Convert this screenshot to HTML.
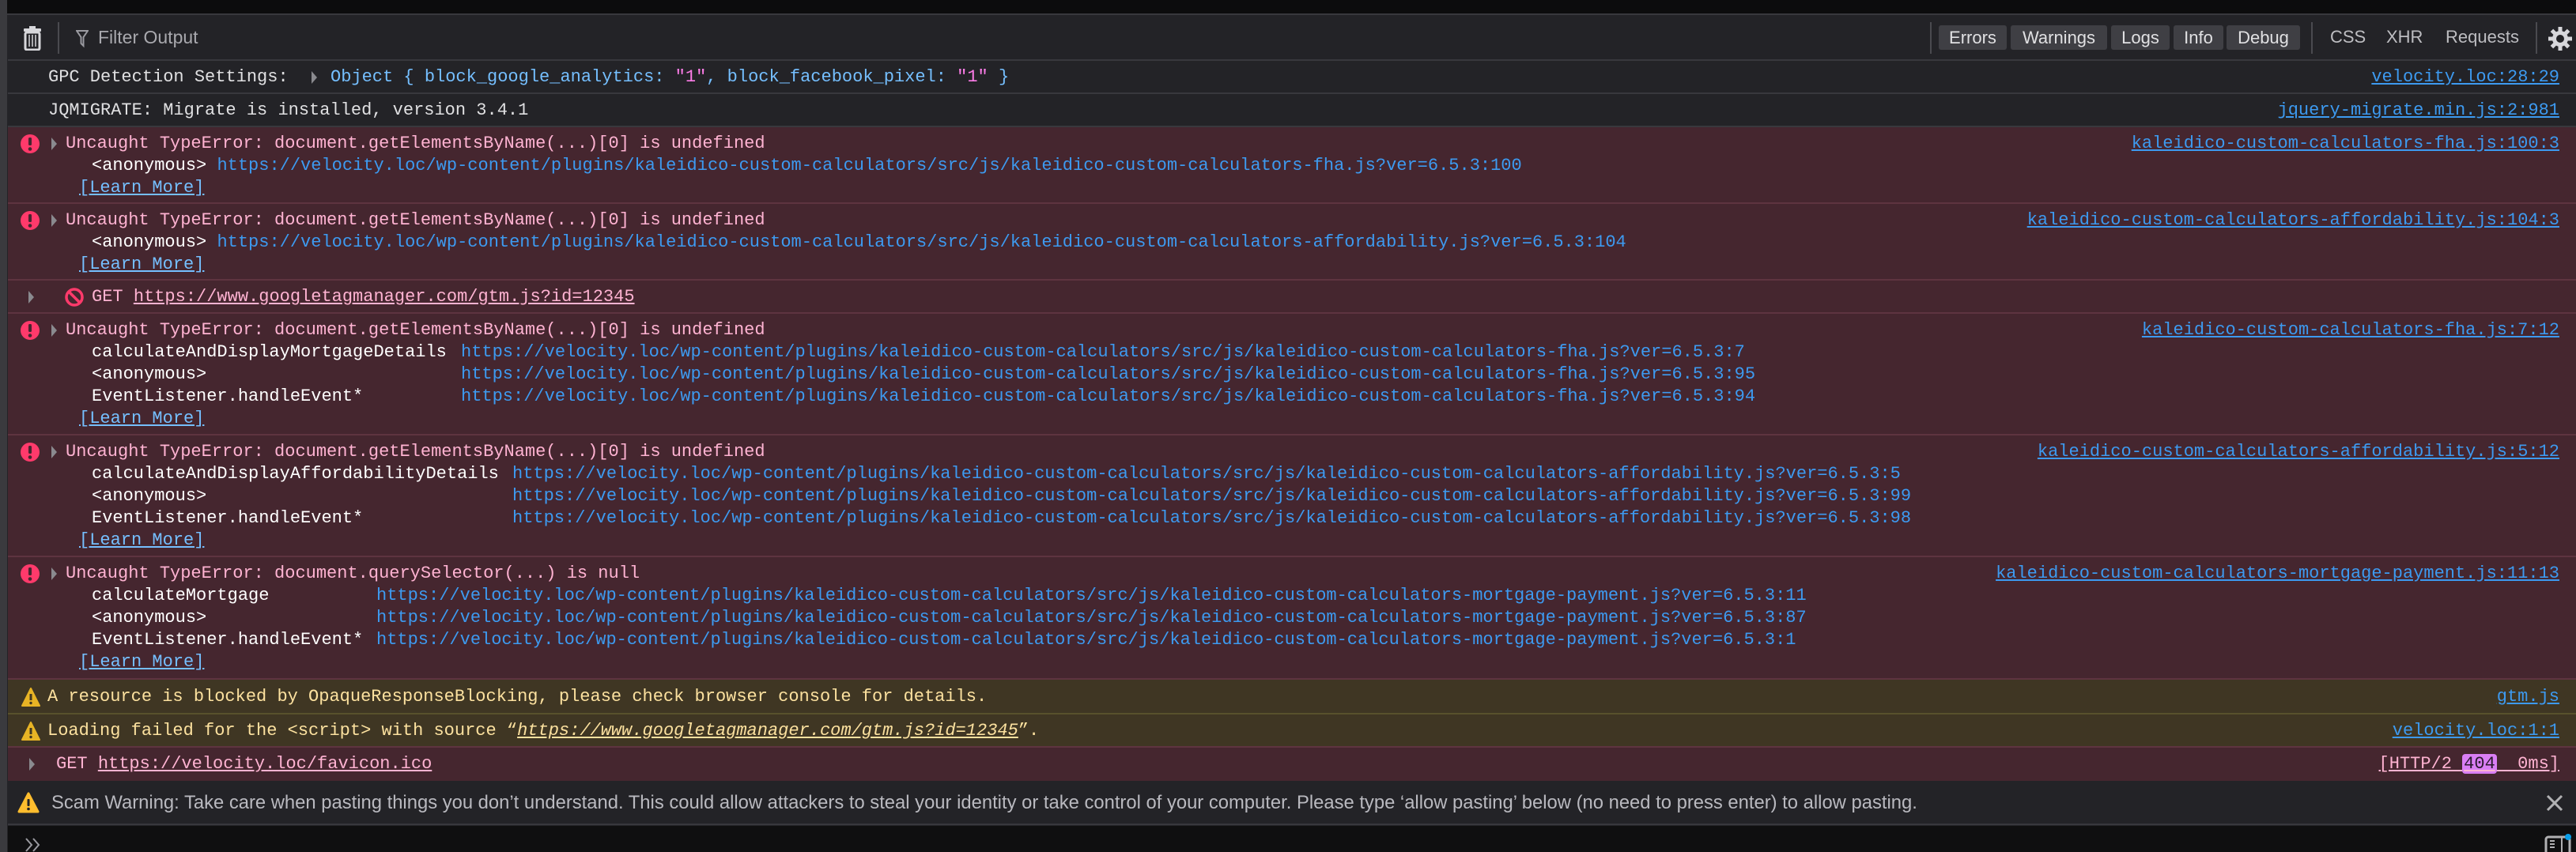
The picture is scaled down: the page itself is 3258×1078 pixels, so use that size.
<!DOCTYPE html>
<html><head><meta charset="utf-8"><style>
*{margin:0;padding:0;box-sizing:border-box}
body{width:3258px;height:1078px;background:#232327;position:relative;overflow:hidden;font-family:"Liberation Mono",monospace;font-size:22px;color:#e8e8ea}
.a{position:absolute;white-space:pre;line-height:28px}
.row{position:absolute;left:10px;right:0;border-bottom:2px solid #38383d}
.err{background:#45262f;border-bottom:2px solid #5e3440}
.warn{background:#3f3623;border-bottom:2px solid #58512c}
.et{color:#ffb3d2}
.wt{color:#fce19f}
.lk{color:#3d9af0}
.rl{color:#3d9af0;text-decoration:underline;position:absolute;right:21px;white-space:pre;line-height:28px}
.lm{color:#75bfff;text-decoration:underline}
.fn{color:#fff}
.tri{width:0;height:0;border-left:7px solid #8a8a8f;border-top:8px solid transparent;border-bottom:8px solid transparent;position:absolute}
.sans{font-family:"Liberation Sans",sans-serif}
.btn{position:absolute;top:32px;height:31px;background:#3f3f44;border-radius:3px;color:#e0e0e2;font-family:"Liberation Sans",sans-serif;font-size:22px;line-height:31px;text-align:center}
.sep{position:absolute;width:2px;background:#4a4a4f}
</style></head><body>
<div style="position:absolute;left:0;top:0;width:3258px;height:19px;background:#0c0c0d;border-bottom:2px solid #38383d"></div>
<div style="position:absolute;left:0;top:0;width:9px;height:1078px;background:#3a3a3e"></div>
<!-- toolbar -->
<div style="position:absolute;left:10px;top:20px;right:0;height:57px;background:#232327;border-bottom:2px solid #38383d"></div>
<svg style="position:absolute;left:28px;top:31px" width="26" height="33" viewBox="0 0 26 33"><path d="M9 2h8v3H9z" fill="#d7d7db"/><rect x="2" y="5" width="22" height="4" rx="1" fill="#d7d7db"/><rect x="4" y="10" width="18" height="22" rx="2" fill="none" stroke="#d7d7db" stroke-width="3"/><path d="M9 13v15M13 13v15M17 13v15" stroke="#d7d7db" stroke-width="1.5"/></svg>
<div class="sep" style="left:73px;top:28px;height:40px"></div>
<svg style="position:absolute;left:96px;top:37px" width="16" height="24" viewBox="0 0 16 24"><path d="M1 2h14l-5.5 8v11l-3-3V10z" fill="none" stroke="#9a9aa0" stroke-width="2"/></svg>
<div class="a sans" style="left:124px;top:33px;font-size:23px;color:#a9a9ae">Filter Output</div>
<div class="sep" style="left:2441px;top:28px;height:40px"></div>
<div class="btn" style="left:2452px;width:86px">Errors</div>
<div class="btn" style="left:2543px;width:122px">Warnings</div>
<div class="btn" style="left:2670px;width:74px">Logs</div>
<div class="btn" style="left:2749px;width:63px">Info</div>
<div class="btn" style="left:2816px;width:93px">Debug</div>
<div class="sep" style="left:2923px;top:28px;height:40px"></div>
<div class="a sans" style="left:2947px;top:33px;font-size:22px;color:#bdbdc1">CSS</div>
<div class="a sans" style="left:3018px;top:33px;font-size:22px;color:#bdbdc1">XHR</div>
<div class="a sans" style="left:3093px;top:33px;font-size:22px;color:#bdbdc1">Requests</div>
<div class="sep" style="left:3207px;top:28px;height:40px"></div>
<svg style="position:absolute;left:3221px;top:32px" width="34" height="34" viewBox="0 0 34 34"><g stroke="#d7d7db" stroke-width="5"><path d="M17 2v30M2 17h30M6.4 6.4l21.2 21.2M27.6 6.4L6.4 27.6"/></g><circle cx="17" cy="17" r="10" fill="#d7d7db"/><circle cx="17" cy="17" r="5" fill="#232327"/></svg>

<!-- GPC -->
<div class="row" style="top:77px;height:42px"></div>
<div class="a" style="left:61px;top:84px;color:#e0e0e2">GPC Detection Settings:</div>
<div class="tri" style="left:394px;top:90px"></div>
<div class="a" style="left:418px;top:84px;color:#75bfff">Object { block_google_analytics: <span style="color:#ff7de9">"1"</span>, block_facebook_pixel: <span style="color:#ff7de9">"1"</span> }</div>
<div class="rl" style="top:84px">velocity.loc:28:29</div>
<!-- JQ -->
<div class="row" style="top:119px;height:42px"></div>
<div class="a" style="left:61px;top:126px;color:#e0e0e2">JQMIGRATE: Migrate is installed, version 3.4.1</div>
<div class="rl" style="top:126px">jquery-migrate.min.js:2:981</div>

<!-- err1 -->
<div class="row err" style="top:161px;height:97px"></div>
<svg style="position:absolute;left:26px;top:170px" width="24" height="24"><circle cx="12" cy="12" r="12" fill="#ff3a6b"/><rect x="10" y="4" width="4" height="10" rx="1.5" fill="#45262f"/><circle cx="12" cy="18.5" r="2.3" fill="#45262f"/></svg>
<div class="tri" style="left:65px;top:174px"></div>
<div class="a et" style="left:83px;top:168px">Uncaught TypeError: document.getElementsByName(...)[0] is undefined</div>
<div class="rl" style="top:168px">kaleidico-custom-calculators-fha.js:100:3</div>
<div class="a" style="left:116px;top:196px"><span class="fn">&lt;anonymous&gt;</span> <span class="lk">https://velocity.loc/wp-content/plugins/kaleidico-custom-calculators/src/js/kaleidico-custom-calculators-fha.js?ver=6.5.3:100</span></div>
<div class="a lm" style="left:100px;top:224px">[Learn More]</div>

<!-- err2 -->
<div class="row err" style="top:258px;height:97px"></div>
<svg style="position:absolute;left:26px;top:267px" width="24" height="24"><circle cx="12" cy="12" r="12" fill="#ff3a6b"/><rect x="10" y="4" width="4" height="10" rx="1.5" fill="#45262f"/><circle cx="12" cy="18.5" r="2.3" fill="#45262f"/></svg>
<div class="tri" style="left:65px;top:271px"></div>
<div class="a et" style="left:83px;top:265px">Uncaught TypeError: document.getElementsByName(...)[0] is undefined</div>
<div class="rl" style="top:265px">kaleidico-custom-calculators-affordability.js:104:3</div>
<div class="a" style="left:116px;top:293px"><span class="fn">&lt;anonymous&gt;</span> <span class="lk">https://velocity.loc/wp-content/plugins/kaleidico-custom-calculators/src/js/kaleidico-custom-calculators-affordability.js?ver=6.5.3:104</span></div>
<div class="a lm" style="left:100px;top:321px">[Learn More]</div>

<!-- GET gtm -->
<div class="row err" style="top:355px;height:42px"></div>
<div class="tri" style="left:36px;top:368px"></div>
<svg style="position:absolute;left:82px;top:364px" width="24" height="24"><circle cx="12" cy="12" r="10" fill="none" stroke="#ff3a6b" stroke-width="3.5"/><path d="M5 5l14 14" stroke="#ff3a6b" stroke-width="3.5"/></svg>
<div class="a et" style="left:116px;top:362px">GET <span style="text-decoration:underline">https://www.googletagmanager.com/gtm.js?id=12345</span></div>

<!-- err3 -->
<div class="row err" style="top:397px;height:154px"></div>
<svg style="position:absolute;left:26px;top:406px" width="24" height="24"><circle cx="12" cy="12" r="12" fill="#ff3a6b"/><rect x="10" y="4" width="4" height="10" rx="1.5" fill="#45262f"/><circle cx="12" cy="18.5" r="2.3" fill="#45262f"/></svg>
<div class="tri" style="left:65px;top:410px"></div>
<div class="a et" style="left:83px;top:404px">Uncaught TypeError: document.getElementsByName(...)[0] is undefined</div>
<div class="rl" style="top:404px">kaleidico-custom-calculators-fha.js:7:12</div>
<div class="a fn" style="left:116px;top:432px">calculateAndDisplayMortgageDetails</div>
<div class="a fn" style="left:116px;top:460px">&lt;anonymous&gt;</div>
<div class="a fn" style="left:116px;top:488px">EventListener.handleEvent*</div>
<div class="a lk" style="left:583px;top:432px">https://velocity.loc/wp-content/plugins/kaleidico-custom-calculators/src/js/kaleidico-custom-calculators-fha.js?ver=6.5.3:7</div>
<div class="a lk" style="left:583px;top:460px">https://velocity.loc/wp-content/plugins/kaleidico-custom-calculators/src/js/kaleidico-custom-calculators-fha.js?ver=6.5.3:95</div>
<div class="a lk" style="left:583px;top:488px">https://velocity.loc/wp-content/plugins/kaleidico-custom-calculators/src/js/kaleidico-custom-calculators-fha.js?ver=6.5.3:94</div>
<div class="a lm" style="left:100px;top:516px">[Learn More]</div>

<!-- err4 -->
<div class="row err" style="top:551px;height:154px"></div>
<svg style="position:absolute;left:26px;top:560px" width="24" height="24"><circle cx="12" cy="12" r="12" fill="#ff3a6b"/><rect x="10" y="4" width="4" height="10" rx="1.5" fill="#45262f"/><circle cx="12" cy="18.5" r="2.3" fill="#45262f"/></svg>
<div class="tri" style="left:65px;top:564px"></div>
<div class="a et" style="left:83px;top:558px">Uncaught TypeError: document.getElementsByName(...)[0] is undefined</div>
<div class="rl" style="top:558px">kaleidico-custom-calculators-affordability.js:5:12</div>
<div class="a fn" style="left:116px;top:586px">calculateAndDisplayAffordabilityDetails</div>
<div class="a fn" style="left:116px;top:614px">&lt;anonymous&gt;</div>
<div class="a fn" style="left:116px;top:642px">EventListener.handleEvent*</div>
<div class="a lk" style="left:648px;top:586px">https://velocity.loc/wp-content/plugins/kaleidico-custom-calculators/src/js/kaleidico-custom-calculators-affordability.js?ver=6.5.3:5</div>
<div class="a lk" style="left:648px;top:614px">https://velocity.loc/wp-content/plugins/kaleidico-custom-calculators/src/js/kaleidico-custom-calculators-affordability.js?ver=6.5.3:99</div>
<div class="a lk" style="left:648px;top:642px">https://velocity.loc/wp-content/plugins/kaleidico-custom-calculators/src/js/kaleidico-custom-calculators-affordability.js?ver=6.5.3:98</div>
<div class="a lm" style="left:100px;top:670px">[Learn More]</div>

<!-- err5 -->
<div class="row err" style="top:705px;height:155px"></div>
<svg style="position:absolute;left:26px;top:714px" width="24" height="24"><circle cx="12" cy="12" r="12" fill="#ff3a6b"/><rect x="10" y="4" width="4" height="10" rx="1.5" fill="#45262f"/><circle cx="12" cy="18.5" r="2.3" fill="#45262f"/></svg>
<div class="tri" style="left:65px;top:718px"></div>
<div class="a et" style="left:83px;top:712px">Uncaught TypeError: document.querySelector(...) is null</div>
<div class="rl" style="top:712px">kaleidico-custom-calculators-mortgage-payment.js:11:13</div>
<div class="a fn" style="left:116px;top:740px">calculateMortgage</div>
<div class="a fn" style="left:116px;top:768px">&lt;anonymous&gt;</div>
<div class="a fn" style="left:116px;top:796px">EventListener.handleEvent*</div>
<div class="a lk" style="left:476px;top:740px">https://velocity.loc/wp-content/plugins/kaleidico-custom-calculators/src/js/kaleidico-custom-calculators-mortgage-payment.js?ver=6.5.3:11</div>
<div class="a lk" style="left:476px;top:768px">https://velocity.loc/wp-content/plugins/kaleidico-custom-calculators/src/js/kaleidico-custom-calculators-mortgage-payment.js?ver=6.5.3:87</div>
<div class="a lk" style="left:476px;top:796px">https://velocity.loc/wp-content/plugins/kaleidico-custom-calculators/src/js/kaleidico-custom-calculators-mortgage-payment.js?ver=6.5.3:1</div>
<div class="a lm" style="left:100px;top:824px">[Learn More]</div>

<!-- warn1 -->
<div class="row warn" style="top:860px;height:44px"></div>
<svg style="position:absolute;left:27px;top:870px" width="24" height="24"><path d="M12 1L23 23H1z" fill="#e8b425" stroke="#e8b425" stroke-linejoin="round" stroke-width="2"/><rect x="10.5" y="8" width="3" height="8" fill="#3f3623"/><circle cx="12" cy="19.5" r="1.7" fill="#3f3623"/></svg>
<div class="a wt" style="left:60px;top:868px">A resource is blocked by OpaqueResponseBlocking, please check browser console for details.</div>
<div class="rl" style="top:868px">gtm.js</div>
<!-- warn2 -->
<div class="row warn" style="top:904px;height:42px;border-bottom-color:#5e3440"></div>
<svg style="position:absolute;left:27px;top:913px" width="24" height="24"><path d="M12 1L23 23H1z" fill="#e8b425" stroke="#e8b425" stroke-linejoin="round" stroke-width="2"/><rect x="10.5" y="8" width="3" height="8" fill="#3f3623"/><circle cx="12" cy="19.5" r="1.7" fill="#3f3623"/></svg>
<div class="a wt" style="left:60px;top:911px">Loading failed for the &lt;script&gt; with source “<i style="text-decoration:underline">https://www.googletagmanager.com/gtm.js?id=12345</i>”.</div>
<div class="rl" style="top:911px">velocity.loc:1:1</div>
<!-- GET favicon -->
<div class="row err" style="top:946px;height:42px;border-bottom:none"></div>
<div class="tri" style="left:37px;top:959px"></div>
<div class="a et" style="left:71px;top:953px">GET <span style="text-decoration:underline">https://velocity.loc/favicon.ico</span></div>
<div class="a et" style="right:21px;top:953px;text-decoration:underline">[HTTP/2 <span style="background:#d97ef4;color:#2a1a2e;border-radius:4px;padding:0 2px">404</span>  0ms]</div>

<!-- scam -->
<div style="position:absolute;left:10px;right:0;top:988px;height:56px;background:#232327;border-bottom:2px solid #38383d"></div>
<svg style="position:absolute;left:22px;top:1002px" width="28" height="28"><path d="M14 2L26 25H2z" fill="#ffbd2e" stroke="#ffbd2e" stroke-linejoin="round" stroke-width="3"/><rect x="12.5" y="9" width="3" height="9" rx="1" fill="#232327"/><circle cx="14" cy="21.5" r="1.8" fill="#232327"/></svg>
<div class="a sans" style="left:65px;top:1002px;font-size:23.8px;color:#b9b9bf">Scam Warning: Take care when pasting things you don’t understand. This could allow attackers to steal your identity or take control of your computer. Please type ‘allow pasting’ below (no need to press enter) to allow pasting.</div>
<svg style="position:absolute;left:3219px;top:1004px" width="24" height="24"><path d="M3 3l18 18M21 3L3 21" stroke="#b1b1b3" stroke-width="3"/></svg>
<!-- input -->
<div style="position:absolute;left:10px;right:0;top:1045px;height:33px;background:#0f0f10"></div>
<svg style="position:absolute;left:30px;top:1060px" width="24" height="18"><path d="M3 1l7 8-7 8M12 1l7 8-7 8" fill="none" stroke="#9a9aa0" stroke-width="2"/></svg>
<svg style="position:absolute;left:3218px;top:1055px" width="36" height="23"><rect x="2" y="4" width="30" height="22" rx="3" fill="none" stroke="#b1b1b3" stroke-width="3"/><path d="M22 4v20M7 9h6M7 13h6M7 17h6" stroke="#b1b1b3" stroke-width="2"/><circle cx="30" cy="4" r="4" fill="#0b9ee8"/></svg>
</body></html>
